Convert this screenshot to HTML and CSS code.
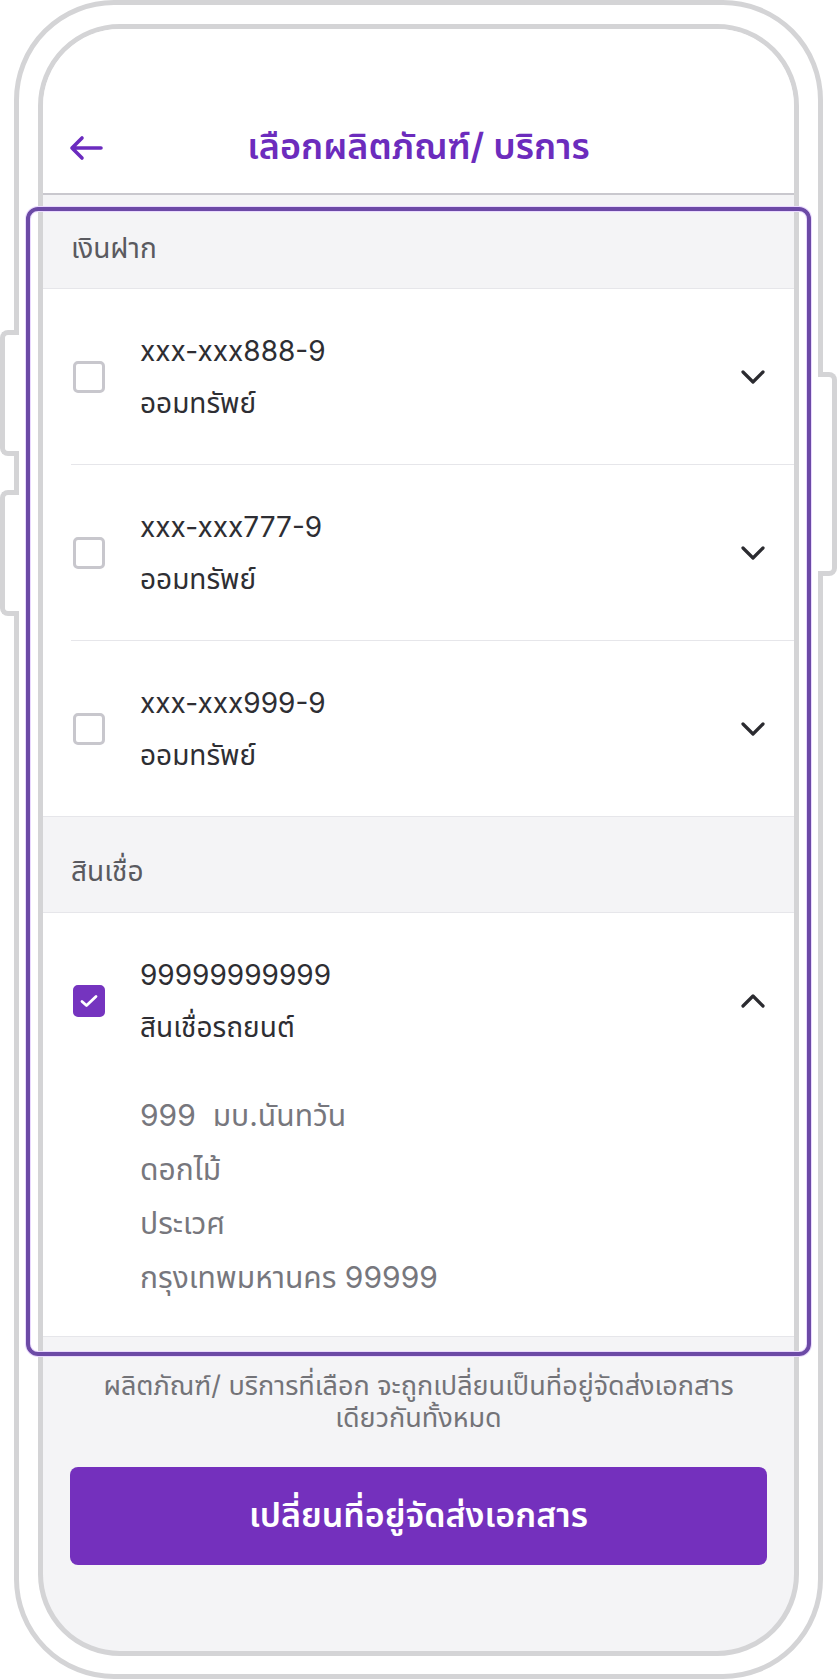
FILE: index.html
```html
<!DOCTYPE html>
<html lang="th">
<head>
    <meta charset="UTF-8">
    <meta name="viewport" content="width=device-width, initial-scale=1.0">
    <title>เลือกผลิตภัณฑ์/ บริการ</title>
    <link rel="stylesheet" href="styles.css">
</head>
<body>
    <div class="side-btn side-btn-left top-1"></div>
    <div class="side-btn side-btn-left top-2"></div>
    <div class="side-btn side-btn-right"></div>

    <div class="phone">
        <div class="screen">
            <div class="header">
                <div class="header-row">
                    <svg class="back" width="34" height="26" viewBox="0 0 34 26">
                        <path d="M32 13 H3 M13 3 L3 13 L13 23" fill="none" stroke="#6b2bbf" stroke-width="3.6" stroke-linecap="round" stroke-linejoin="round"/>
                    </svg>
                    <h1>เลือกผลิตภัณฑ์/ บริการ</h1>
                </div>
            </div>

            <div class="section-title">เงินฝาก</div>
            <div class="list">
                <div class="item">
                    <div class="item-row">
                        <span class="checkbox"></span>
                        <div class="item-text">
                            <div>xxx-xxx888-9</div>
                            <div>ออมทรัพย์</div>
                        </div>
                        <svg class="chevron" width="26" height="16" viewBox="0 0 26 16">
                            <path d="M3 3 L13 13 L23 3" fill="none" stroke="#2b2b30" stroke-width="3.2" stroke-linecap="round" stroke-linejoin="round"/>
                        </svg>
                    </div>
                </div>
                <div class="item">
                    <div class="item-row">
                        <span class="checkbox"></span>
                        <div class="item-text">
                            <div>xxx-xxx777-9</div>
                            <div>ออมทรัพย์</div>
                        </div>
                        <svg class="chevron" width="26" height="16" viewBox="0 0 26 16">
                            <path d="M3 3 L13 13 L23 3" fill="none" stroke="#2b2b30" stroke-width="3.2" stroke-linecap="round" stroke-linejoin="round"/>
                        </svg>
                    </div>
                </div>
                <div class="item last">
                    <div class="item-row">
                        <span class="checkbox"></span>
                        <div class="item-text">
                            <div>xxx-xxx999-9</div>
                            <div>ออมทรัพย์</div>
                        </div>
                        <svg class="chevron" width="26" height="16" viewBox="0 0 26 16">
                            <path d="M3 3 L13 13 L23 3" fill="none" stroke="#2b2b30" stroke-width="3.2" stroke-linecap="round" stroke-linejoin="round"/>
                        </svg>
                    </div>
                </div>
            </div>

            <div class="section-title">สินเชื่อ</div>
            <div class="list">
                <div class="item last">
                    <div class="item-row">
                        <span class="checkbox checked">
                            <svg width="18" height="14" viewBox="0 0 18 14">
                                <path d="M2 7.5 L6.5 11.5 L16 2.5" fill="none" stroke="#fff" stroke-width="2.8" stroke-linecap="round" stroke-linejoin="round"/>
                            </svg>
                        </span>
                        <div class="item-text">
                            <div>99999999999</div>
                            <div>สินเชื่อรถยนต์</div>
                        </div>
                        <svg class="chevron" width="26" height="16" viewBox="0 0 26 16">
                            <path d="M3 13 L13 3 L23 13" fill="none" stroke="#2b2b30" stroke-width="3.2" stroke-linecap="round" stroke-linejoin="round"/>
                        </svg>
                    </div>
                    <div class="address">
                        <div>999&nbsp; มบ.นันทวัน</div>
                        <div>ดอกไม้</div>
                        <div>ประเวศ</div>
                        <div>กรุงเทพมหานคร 99999</div>
                    </div>
                </div>
            </div>

            <p class="note">ผลิตภัณฑ์/ บริการที่เลือก จะถูกเปลี่ยนเป็นที่อยู่จัดส่งเอกสาร<br>เดียวกันทั้งหมด</p>
            <button class="submit">เปลี่ยนที่อยู่จัดส่งเอกสาร</button>
        </div>
    </div>

    <div class="highlight"></div>
</body>
</html>
```

FILE: styles.css
```css
body {
    margin: 0;
    background-color: #fff;
    font-family: Inter, "Noto Sans Thai", "Noto Sans", "Liberation Sans", sans-serif;
    color: #2e2e33;
    position: relative;
    width: 837px;
    height: 1680px;
    overflow: hidden;
}
.phone {
    margin-left: 14px;
    width: 809px;
    height: 1679px;
    box-sizing: border-box;
    border: 5px solid #d4d4d6;
    border-radius: 100px;
    background-color: #fff;
}
.screen {
    margin: 19px 0 0 19px;
    width: 761px;
    height: 1632px;
    box-sizing: border-box;
    border: 5px solid #d4d4d6;
    border-radius: 82px;
    background-color: #f4f4f6;
    overflow: hidden;
}
.side-btn {
    position: absolute;
    width: 19px;
    box-sizing: border-box;
    border: 5px solid #d4d4d6;
    background-color: #fff;
    z-index: 1;
}
.side-btn-left {
    left: 0;
    border-right: none;
    border-radius: 8px 0 0 8px;
}
.top-1 {
    top: 330px;
    height: 126px;
}
.top-2 {
    top: 490px;
    height: 126px;
}
.side-btn-right {
    left: 818px;
    top: 372px;
    height: 204px;
    border-left: none;
    border-radius: 0 8px 8px 0;
}
.header {
    background-color: #fff;
    padding: 89px 0 15px;
    border-bottom: 2px solid #c9c8ce;
}
.header-row {
    position: relative;
    height: 60px;
    display: flex;
    align-items: center;
    justify-content: center;
}
.back {
    position: absolute;
    left: 26px;
    top: 17px;
}
h1 {
    margin: 0;
    font-size: 36px;
    font-weight: 600;
    color: #6c2cbd;
}
.section-title {
    height: 94px;
    box-sizing: border-box;
    display: flex;
    align-items: center;
    padding: 16px 0 0 28px;
    font-size: 28px;
    color: #5a5a60;
    border-bottom: 1px solid #e6e6ea;
}
.list + .section-title {
    height: 96px;
}
.list {
    background-color: #fff;
}
.item {
    margin-left: 28px;
    border-bottom: 1px solid #e6e6ea;
}
.item.last {
    margin-left: 0;
    padding-left: 28px;
}
.item-row {
    height: 175px;
    display: flex;
    align-items: center;
    padding-right: 28px;
}
.checkbox {
    width: 32px;
    height: 32px;
    box-sizing: border-box;
    border: 3px solid #c8c7cd;
    border-radius: 5px;
    margin-left: 2px;
    display: flex;
    align-items: center;
    justify-content: center;
}
.checkbox.checked {
    background-color: #7534bf;
    border-color: #7534bf;
}
.item-text {
    flex: 1;
    margin-left: 35px;
    font-size: 28px;
    line-height: 52px;
    color: #2e2e33;
}
.address {
    padding: 0 0 32px 69px;
    font-size: 30px;
    line-height: 54px;
    color: #77777d;
}
.note {
    margin: 33px 0 0;
    text-align: center;
    font-size: 27px;
    line-height: 32px;
    color: #737378;
}
.submit {
    display: block;
    margin: 33px 27px 0;
    width: calc(100% - 54px);
    height: 98px;
    border: none;
    border-radius: 8px;
    background-color: #7430bd;
    color: #fff;
    font-family: inherit;
    font-size: 34px;
    font-weight: 600;
}
.highlight {
    position: absolute;
    left: 26px;
    top: 207px;
    width: 785px;
    height: 1149px;
    box-sizing: border-box;
    border: 4px solid #6c4aa6;
    border-radius: 12px;
    box-shadow: 0 0 0 1px #ead9ff, inset 0 0 0 1px #ead9ff;
    z-index: 2;
}
```
